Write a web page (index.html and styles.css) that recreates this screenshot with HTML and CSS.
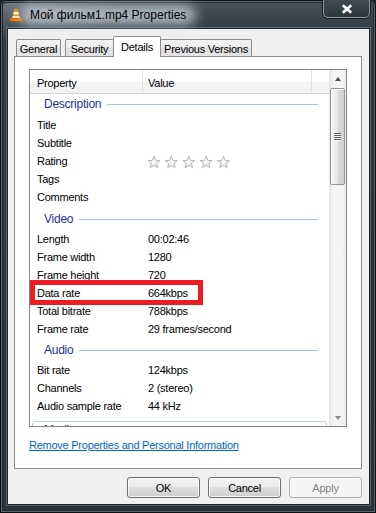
FILE: index.html
```html
<!DOCTYPE html>
<html>
<head>
<meta charset="utf-8">
<link rel="stylesheet" href="styles.css">
</head>
<body>
<div class="window">
  <div class="titlebar">
    <svg class="app-icon" width="14" height="14" viewBox="0 0 14 14">
      <path d="M5.6 0.6 L8.4 0.6 L11 10.5 L3 10.5 Z" fill="#f28c00"/>
      <path d="M4.7 3.9 L9.3 3.9 L9.9 6.2 L4.1 6.2 Z" fill="#ffffff"/>
      <path d="M3.6 8.2 L10.4 8.2 L10.8 9.8 L3.2 9.8 Z" fill="#ffffff"/>
      <path d="M0.6 10.3 L13.4 10.3 L12.8 13.5 L1.2 13.5 Z" fill="#e87200"/>
      <path d="M1.2 13.5 L12.8 13.5" stroke="#a04a00" stroke-width="0.8"/>
    </svg>
    <span class="title">Мой фильм1.mp4 Properties</span>
    <div class="close-btn">
      <svg width="12" height="10" viewBox="0 0 12 10"><path d="M1.8 1.2 L10.2 8.8 M10.2 1.2 L1.8 8.8" stroke="#ffffff" stroke-width="2.6"/></svg>
    </div>
  </div>
  <div class="client">
    <div class="tabs">
      <div class="tab t-general">General</div>
      <div class="tab t-security">Security</div>
      <div class="tab active t-details">Details</div>
      <div class="tab t-prev">Previous Versions</div>
    </div>
    <div class="panel">
      <div class="listview">
        <div class="lv-main">
          <div class="lv-header">
            <div class="hcell hc-name">Property</div>
            <div class="hcell hc-value">Value</div>
            <div class="hcell hc-rest"></div>
          </div>
          <div class="lv-rows">
            <div class="group first"><span>Description</span><i class="rule"></i></div>
            <div class="row"><span class="name">Title</span><span class="val"></span></div>
            <div class="row"><span class="name">Subtitle</span><span class="val"></span></div>
            <div class="row"><span class="name">Rating</span><span class="val">
              <svg class="stars" width="84" height="14" viewBox="0 0 84 14">
                <defs>
                  <linearGradient id="sg" x1="0" y1="0" x2="0" y2="1">
                    <stop offset="0" stop-color="#ffffff"/>
                    <stop offset="1" stop-color="#ececec"/>
                  </linearGradient>
                  <path id="star" d="M6.5 0.8 L8.1 4.8 L12.4 5.1 L9.1 7.9 L10.2 12.1 L6.5 9.8 L2.8 12.1 L3.9 7.9 L0.6 5.1 L4.9 4.8 Z" fill="url(#sg)" stroke="#adadad" stroke-width="0.9" stroke-linejoin="round"/>
                </defs>
                <use href="#star" x="0.5" y="0.5"/>
                <use href="#star" x="17.9" y="0.5"/>
                <use href="#star" x="35.3" y="0.5"/>
                <use href="#star" x="52.7" y="0.5"/>
                <use href="#star" x="70.1" y="0.5"/>
              </svg>
            </span></div>
            <div class="row"><span class="name">Tags</span><span class="val"></span></div>
            <div class="row"><span class="name">Comments</span><span class="val"></span></div>
            <div class="group"><span>Video</span><i class="rule"></i></div>
            <div class="row"><span class="name">Length</span><span class="val">00:02:46</span></div>
            <div class="row"><span class="name">Frame width</span><span class="val">1280</span></div>
            <div class="row"><span class="name">Frame height</span><span class="val">720</span></div>
            <div class="row marked"><span class="name">Data rate</span><span class="val">664kbps</span><span class="mark-box"></span></div>
            <div class="row"><span class="name">Total bitrate</span><span class="val">788kbps</span></div>
            <div class="row"><span class="name">Frame rate</span><span class="val">29 frames/second</span></div>
            <div class="group"><span>Audio</span><i class="rule"></i></div>
            <div class="row"><span class="name">Bit rate</span><span class="val">124kbps</span></div>
            <div class="row"><span class="name">Channels</span><span class="val">2 (stereo)</span></div>
            <div class="row"><span class="name">Audio sample rate</span><span class="val">44 kHz</span></div>
            <div class="group focus"><span>Media</span><i class="rule"></i></div>
          </div>
        </div>
        <div class="scrollbar">
          <div class="sb-btn"><span class="arrow-up"></span></div>
          <div class="sb-thumb"><span class="grip"></span></div>
          <div class="sb-track"></div>
          <div class="sb-btn"><span class="arrow-down"></span></div>
        </div>
      </div>
      <a class="link" href="#">Remove Properties and Personal Information</a>
    </div>
    <div class="buttons">
      <button class="btn">OK</button>
      <button class="btn">Cancel</button>
      <button class="btn disabled" disabled>Apply</button>
    </div>
  </div>
</div>
</body>
</html>
```

FILE: styles.css
```css
html, body {
  margin: 0;
  padding: 0;
}
body {
  width: 376px;
  height: 513px;
  overflow: hidden;
  background: #1c2126;
  font-family: "Liberation Sans", Arial, sans-serif;
}

.window {
  width: 376px;
  height: 513px;
  box-sizing: border-box;
  display: flex;
  flex-direction: column;
  border-radius: 6px 6px 0 0;
  background:
    radial-gradient(ellipse 120px 40px at 10px 0px, rgba(150,160,168,0.55), rgba(150,160,168,0) 100%),
    linear-gradient(to bottom, #4a555e 0px, #37424b 20px, #2f3942 60px, #2a333b 100%);
  box-shadow: inset 0 0 0 1px #0c1013, inset 0 0 0 2px #5b656d, inset 0 0 0 3px #222930;
}

/* title bar */
.titlebar {
  flex: none;
  height: 29px;
  display: flex;
  align-items: center;
  padding-left: 9px;
}
.app-icon {
  flex: none;
  display: block;
}
.title {
  position: relative;
  z-index: 0;
  margin-left: 7px;
  font-size: 12px;
  color: #000;
  white-space: nowrap;
}
.title::before {
  content: "";
  position: absolute;
  left: -10px;
  right: -10px;
  top: -3px;
  bottom: -3px;
  background: rgba(214, 220, 225, 0.75);
  filter: blur(6px);
  border-radius: 12px;
  z-index: -1;
}
.close-btn {
  margin-left: auto;
  margin-right: 6px;
  align-self: flex-start;
  margin-top: -1px;
  width: 47px;
  height: 19px;
  box-sizing: border-box;
  border: 1px solid #8f979d;
  border-top: none;
  border-radius: 0 0 5px 5px;
  background: linear-gradient(#404b54, #2e373f);
  box-shadow: 0 0 0 1px #161a1e;
  display: flex;
  align-items: center;
  justify-content: center;
}
.close-btn svg {
  display: block;
  margin-top: 1px;
}

/* client */
.client {
  flex: none;
  margin: 0 7px 0 8px;
  height: 475px;
  background: #f0f0f0;
  display: flex;
  flex-direction: column;
  box-shadow: 0 0 0 1px #1f252a, 0 0 0 2px rgba(170, 180, 188, 0.35);
}

/* tabs */
.tabs {
  flex: none;
  height: 20px;
  margin-top: 7px;
  padding-left: 8px;
  display: flex;
  align-items: flex-end;
  position: relative;
  z-index: 1;
}
.tab {
  height: 17px;
  box-sizing: border-box;
  border: 1px solid #898c95;
  border-bottom: none;
  border-radius: 2px 2px 0 0;
  background: linear-gradient(#f3f3f3 0, #ececec 50%, #e0e0e0 50%, #e4e4e4 100%);
  font-size: 11px;
  letter-spacing: -0.25px;
  color: #000;
  display: flex;
  align-items: center;
  justify-content: center;
  padding-top: 1px;
}
.t-general { width: 45px; }
.t-security { width: 49px; margin-left: 4px; }
.t-details { width: 48px; margin-left: -1px; }
.t-prev { width: 92px; margin-left: -1px; }
.tab.active {
  height: 21px;
  margin-bottom: -1px;
  background: #ffffff;
  position: relative;
  z-index: 2;
  padding-top: 0;
  padding-bottom: 1px;
}

/* panel */
.panel {
  flex: none;
  margin: 0 7px 0 6px;
  height: 413px;
  box-sizing: border-box;
  border: 1px solid #898c95;
  background: #ffffff;
  padding: 12px 14px 0 14px;
}

.listview {
  height: 358px;
  box-sizing: border-box;
  border: 1px solid #828790;
  display: flex;
  overflow: hidden;
}
.lv-main {
  flex: 1;
  min-width: 0;
  display: flex;
  flex-direction: column;
  overflow: hidden;
}
.lv-header {
  flex: none;
  height: 24px;
  box-sizing: border-box;
  border-bottom: 1px solid #d5d5d5;
  display: flex;
  background: linear-gradient(#ffffff 0, #ffffff 45%, #f4f5f7 55%, #f1f2f4 100%);
}
.hcell {
  box-sizing: border-box;
  font-size: 11px;
  letter-spacing: -0.25px;
  color: #000;
  display: flex;
  align-items: center;
  padding-top: 2px;
}
.hc-name {
  width: 113px;
  padding-left: 7px;
  border-right: 1px solid #e0e1e4;
}
.hc-value {
  width: 169px;
  padding-left: 5px;
  border-right: 1px solid #e0e1e4;
}
.hc-rest {
  flex: 1;
}

.lv-rows {
  flex: 1;
}
.row {
  height: 18px;
  display: flex;
  align-items: center;
  font-size: 11px;
  letter-spacing: -0.25px;
  color: #000;
}
.name {
  width: 118px;
  padding-left: 7px;
  box-sizing: border-box;
  flex: none;
  white-space: nowrap;
}
.val {
  flex: 1;
  white-space: nowrap;
  display: flex;
  align-items: center;
}
.stars {
  display: block;
  margin-left: -1px;
  margin-top: 1px;
}
.row.marked {
  position: relative;
}
.mark-box {
  position: absolute;
  left: 0;
  top: -4px;
  width: 173px;
  height: 25px;
  box-sizing: border-box;
  border: 5px solid #ed1c24;
}

.group {
  height: 23.5px;
  box-sizing: border-box;
  padding: 2px 11px 0 14px;
  display: flex;
  align-items: center;
  font-size: 12px;
  letter-spacing: -0.25px;
  color: #1e3296;
}
.group.first {
  height: 22px;
  padding-top: 0;
  padding-bottom: 2px;
}
.group .rule {
  flex: 1;
  height: 1px;
  background: #a9c0e6;
  margin-left: 6px;
  margin-top: 1px;
}
.group.focus {
  margin: 5.5px 2px 0 2px;
  border: 1px solid #b7cff0;
  border-radius: 3px;
  padding: 1px 9px 0 11px;
  align-items: flex-start;
}
.group.focus .rule {
  margin-top: 8px;
}

/* scrollbar */
.scrollbar {
  flex: none;
  width: 17px;
  display: flex;
  flex-direction: column;
  background: linear-gradient(to right, #e4e4e4 0, #f4f4f4 25%, #f4f4f4 75%, #ececec 100%);
}
.sb-btn {
  flex: none;
  height: 17px;
  display: flex;
  align-items: center;
  justify-content: center;
}
.arrow-up {
  width: 0;
  height: 0;
  border-left: 3.5px solid transparent;
  border-right: 3.5px solid transparent;
  border-bottom: 4px solid #4a4a4a;
  margin-top: 1px;
}
.arrow-down {
  width: 0;
  height: 0;
  border-left: 3.5px solid transparent;
  border-right: 3.5px solid transparent;
  border-top: 4px solid #8a8a8a;
}
.sb-thumb {
  flex: none;
  height: 97px;
  margin: 1px 1px 0 1px;
  box-sizing: border-box;
  border: 1px solid #959595;
  border-radius: 2px;
  background: linear-gradient(to right, #f4f4f4 0, #ebebeb 45%, #dadada 55%, #cfcfcf 100%);
  box-shadow: inset 1px 1px 0 #ffffff;
  display: flex;
  align-items: center;
  justify-content: center;
}
.grip {
  width: 7px;
  height: 8px;
  background: repeating-linear-gradient(to bottom, #5e5e5e 0, #5e5e5e 1px, #f6f6f6 1px, #f6f6f6 2px);
}
.sb-track {
  flex: 1;
}

/* link */
.link {
  display: block;
  margin-top: 11px;
  width: max-content;
  color: #0066cc;
  font-size: 11px;
  letter-spacing: -0.25px;
  line-height: 14px;
  text-decoration: underline;
}

/* buttons */
.buttons {
  flex: none;
  margin-top: 8px;
  padding-right: 7px;
  display: flex;
  justify-content: flex-end;
  gap: 8px;
}
.btn {
  width: 73px;
  height: 21px;
  box-sizing: border-box;
  padding: 0;
  border: 1px solid #707070;
  border-radius: 3px;
  background: linear-gradient(#f2f2f2 0, #ebebeb 50%, #dddddd 50%, #cfcfcf 100%);
  box-shadow: inset 0 0 0 1px rgba(255,255,255,0.75);
  font-family: "Liberation Sans", Arial, sans-serif;
  font-size: 11px;
  letter-spacing: -0.25px;
  color: #000;
}
.btn.disabled {
  border-color: #adb2b5;
  background: #f4f4f4;
  box-shadow: none;
  color: #838383;
}
```
